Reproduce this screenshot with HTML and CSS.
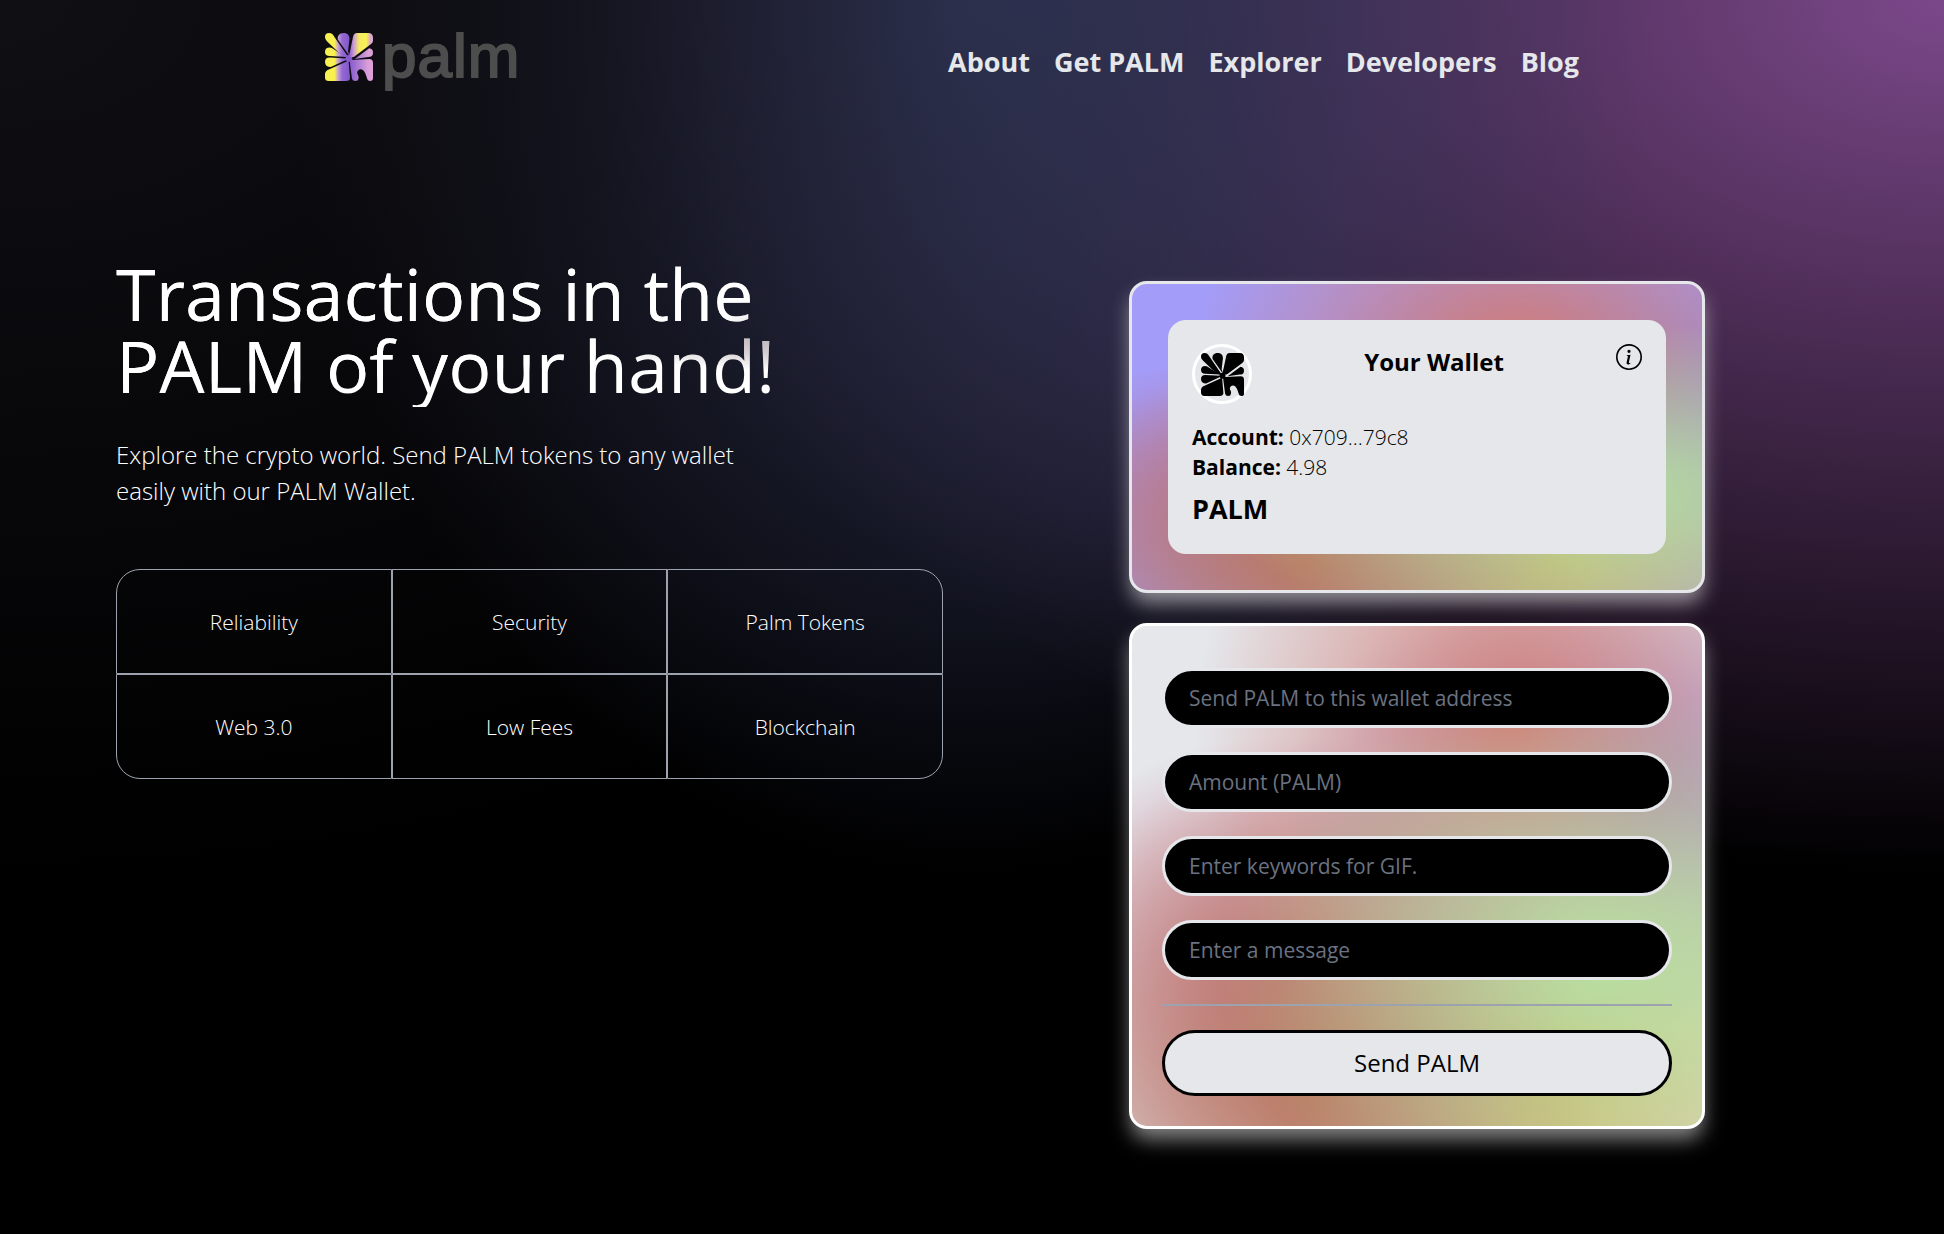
FILE: index.html
```html
<!DOCTYPE html>
<html lang="en">
<head>
<meta charset="utf-8">
<title>Palm Wallet</title>
<link rel="stylesheet" href="styles.css">
</head>
<body>
<svg class="defs" width="0" height="0" aria-hidden="true">
  <defs>
    <linearGradient id="leaf-left" gradientUnits="userSpaceOnUse" x1="0" y1="0" x2="100" y2="0">
      <stop offset=".2" stop-color="#f9f152"/><stop offset=".27" stop-color="#c9a3cf"/><stop offset=".36" stop-color="#9468d2"/><stop offset=".5" stop-color="#8558cc"/>
    </linearGradient>
    <linearGradient id="leaf-top" gradientUnits="userSpaceOnUse" x1="50" y1="0" x2="100" y2="0">
      <stop offset="0" stop-color="#8558cc"/><stop offset=".2" stop-color="#cd9bd6"/><stop offset=".42" stop-color="#f4ea62"/><stop offset=".72" stop-color="#f9f152"/><stop offset=".9" stop-color="#dba8cf"/>
    </linearGradient>
    <linearGradient id="leaf-right" gradientUnits="userSpaceOnUse" x1="50" y1="0" x2="100" y2="0">
      <stop offset="0" stop-color="#8558cc"/><stop offset=".35" stop-color="#a877d4"/><stop offset=".8" stop-color="#dba0d8"/>
    </linearGradient>
    <g id="petals">
      <g class="petals-left">
        <path d="M8 0C14 0 17 3 20 9L47 48L42 50L28 40L5 18C1 14 0 11 0 8C0 3 3 0 8 0Z"/>
        <path d="M10 30Q14 30 20 35L28 40L45 50L10 48Q0 48 0 39Q0 30 10 30Z"/>
        <path d="M10 51L45 53L44 56L12 71Q0 71 0 60Q0 51 10 51Z"/>
        <path d="M44 60L8 76Q0 79 0 86V92Q0 100 8 100H43Q53 100 52 92L49 57Z"/>
        <path d="M39 0C47 0 51 5 51 12L48 38L51 48L27 14C25 6 30 0 39 0Z"/>
        <circle cx="50" cy="53" r="7"/>
      </g>
      <path class="petals-top" d="M67 0H90Q100 0 100 10V16Q100 20 96 23L60 50L49 50L53 34L58 10Q59 0 67 0Z"/>
      <g class="petals-right">
        <path d="M92 32Q100 33 100 41Q100 50 90 50L62 54Z"/>
        <path d="M56 56L92 54Q100 54 100 62V94Q100 100 94 100Q89 100 88 96Q84 82 80 78Q74 73 69 78Q65 82 69 88Q72 94 68 99Q66 100 63 100Q57 100 56 94L51 56Z"/>
      </g>
    </g>
  </defs>
</svg>
<div class="page">
  <header class="header">
    <a class="brand" href="#">
      <svg class="brand-mark" viewBox="0 0 100 100"><use href="#petals"/></svg>
      <span class="brand-name">palm</span>
    </a>
    <nav class="nav">
      <a href="#">About</a><a href="#">Get PALM</a><a href="#">Explorer</a><a href="#">Developers</a><a href="#">Blog</a>
    </nav>
  </header>
  <main class="main">
    <section class="intro">
      <h1 class="title">Transactions in the<br>PALM of your hand!</h1>
      <p class="lead">Explore the crypto world. Send PALM tokens to any wallet<br>easily with our PALM Wallet.</p>
      <div class="features">
        <div>Reliability</div><div>Security</div><div>Palm Tokens</div>
        <div>Web 3.0</div><div>Low Fees</div><div>Blockchain</div>
      </div>
    </section>
    <section class="panel">
      <div class="card wallet-card">
        <div class="wallet">
          <div class="wallet-head">
            <span class="avatar"><svg viewBox="0 0 100 100"><use href="#petals"/></svg></span>
            <h2 class="wallet-title">Your Wallet</h2>
            <svg class="info" viewBox="0 0 16 16"><path d="M8 15A7 7 0 1 1 8 1a7 7 0 0 1 0 14zm0 1A8 8 0 1 0 8 0a8 8 0 0 0 0 16z"/><path d="m8.93 6.588-2.29.287-.082.38.45.083c.294.07.352.176.288.469l-.738 3.468c-.194.897.105 1.319.808 1.319.545 0 1.178-.252 1.465-.598l.088-.416c-.2.176-.492.246-.686.246-.275 0-.375-.193-.304-.533L8.93 6.588zM9 4.5a1 1 0 1 1-2 0 1 1 0 0 1 2 0z"/></svg>
          </div>
          <p class="detail"><b>Account:</b> 0x709...79c8</p>
          <p class="detail"><b>Balance:</b> 4.98</p>
          <p class="token">PALM</p>
        </div>
      </div>
      <form class="card form-card">
        <input class="field" placeholder="Send PALM to this wallet address">
        <input class="field" placeholder="Amount (PALM)">
        <input class="field" placeholder="Enter keywords for GIF.">
        <input class="field" placeholder="Enter a message">
        <div class="rule"></div>
        <button class="send" type="button">Send PALM</button>
      </form>
    </section>
  </main>
</div>
</body>
</html>
```
FILE: styles.css
```css
* { box-sizing: border-box; margin: 0; padding: 0; }
body { background: #000; font-family: "Open Sans", "Noto Sans", sans-serif; color: #fff; }
a { color: inherit; text-decoration: none; }
.defs { position: absolute; }
.page {
  height: 1234px;
  overflow: hidden;
  background-image:
    radial-gradient(at 0% 0%, #100f14 0, transparent 50%),
    radial-gradient(at 50% 0%, #373e65 0, transparent 50%),
    radial-gradient(at 100% 0%, #7b488a 0, transparent 50%);
}
.header { display: flex; justify-content: space-between; align-items: center; height: 124px; padding: 0 365px 0 325px; }
.brand { display: flex; align-items: center; gap: 9px; height: 66px; margin-bottom: 11px; }
.brand-mark { width: 48px; height: 48px; }
.petals-left { fill: var(--leaf, url(#leaf-left)); }
.petals-top { fill: var(--leaf, url(#leaf-top)); }
.petals-right { fill: var(--leaf, url(#leaf-right)); }
.brand-name { margin-bottom: 2px; font: 400 62px/66px "Liberation Sans", Arial, sans-serif; letter-spacing: 1px; color: #4d4d4d; -webkit-text-stroke: 2px #4d4d4d; }
.nav { display: flex; gap: 24px; font-size: 27px; font-weight: 700; line-height: 40px; color: #e5e7eb; }
.main { display: flex; justify-content: space-between; padding: 0 239px 0 116px; }
.intro { width: 827px; padding-top: 133px; }
.title {
  padding-bottom: 6px;
  font-size: 72px; font-weight: 400; line-height: 72px; color: transparent;
  background:
    radial-gradient(at 4% 36%, #fff 51.5%, transparent 56%),
    radial-gradient(400px 38px at 100% 80px, #94848f 0, transparent 100%),
    #fff;
  -webkit-background-clip: text; background-clip: text;
}
.lead { margin-top: 30px; font-size: 24px; font-weight: 300; line-height: 36px; }
.features { display: grid; grid-template-columns: repeat(3, 1fr); grid-auto-rows: 105px; margin-top: 60px; font-size: 21px; font-weight: 300; }
.features div { display: flex; align-items: center; justify-content: center; border: 1px solid #9ca3af; }
.features div:nth-child(1) { border-top-left-radius: 24px; }
.features div:nth-child(3) { border-top-right-radius: 24px; }
.features div:nth-child(4) { border-bottom-left-radius: 24px; }
.features div:nth-child(6) { border-bottom-right-radius: 24px; }
.panel { display: flex; flex-direction: column; gap: 30px; width: 576px; padding-top: 157px; }
.card { border: 3px solid #e5e7eb; border-radius: 18px; box-shadow: 0 12px 20px -2px rgba(255, 255, 255, .52); }
.wallet-card {
  padding: 36px;
  background-color: #a39cf8;
  background-image:
    radial-gradient(at 83% 67%, #b4dda0 0, transparent 58%),
    radial-gradient(at 67% 20%, #d07c78 0, transparent 59%),
    radial-gradient(at 88% 35%, #8c8cd8 0, transparent 50%),
    radial-gradient(at 31% 91%, #b97a62 0, transparent 52%),
    radial-gradient(at 27% 71%, #c06c88 0, transparent 49%),
    radial-gradient(at 74% 89%, #d0b060 0, transparent 51%),
    radial-gradient(at 53% 75%, #8fe0c8 0, transparent 45%);
}
.wallet { height: 234px; padding: 24px; border-radius: 18px; background: #e5e7eb; color: #000; }
.wallet-head { display: flex; justify-content: space-between; align-items: flex-start; height: 78px; }
.avatar { --leaf: #000; display: flex; align-items: center; justify-content: center; width: 60px; height: 60px; border: 3px solid #fff; border-radius: 50%; }
.avatar svg { flex: none; width: 43px; height: 43px; }
.wallet-title { font-size: 24px; line-height: 36px; font-weight: 700; }
.info { width: 26px; height: 26px; }
.detail { font-size: 21px; line-height: 30px; font-weight: 300; }
.detail b { font-weight: 700; }
.token { margin-top: 7px; font-size: 27px; line-height: 40px; font-weight: 700; }
.form-card {
  padding: 42px 30px 30px;
  border-color: #fff;
  background-color: #e5e7eb;
  background-image:
    radial-gradient(at 83% 67%, #b8e0a0 0, transparent 58%),
    radial-gradient(at 67% 20%, #d07e78 0, transparent 59%),
    radial-gradient(at 88% 35%, #9488dc 0, transparent 50%),
    radial-gradient(at 31% 91%, #b97a62 0, transparent 52%),
    radial-gradient(at 27% 71%, #c46c84 0, transparent 49%),
    radial-gradient(at 74% 89%, #d2b060 0, transparent 51%),
    radial-gradient(at 53% 75%, #8fe0c8 0, transparent 45%);
}
.field { display: block; width: 100%; height: 60px; margin-bottom: 24px; padding: 0 24px; border: 3px solid #e5e7eb; border-radius: 30px; background: #000; color: #fff; font: 400 21px "Open Sans", sans-serif; }
.field::placeholder { color: #6b7280; opacity: 1; }
.rule { height: 2px; background: #9ca3af; }
.send { display: block; width: 100%; height: 66px; margin-top: 24px; padding-bottom: 2px; border: 3px solid #000; border-radius: 33px; background: #e5e7eb; color: #000; font: 400 24px "Open Sans", sans-serif; }
```
